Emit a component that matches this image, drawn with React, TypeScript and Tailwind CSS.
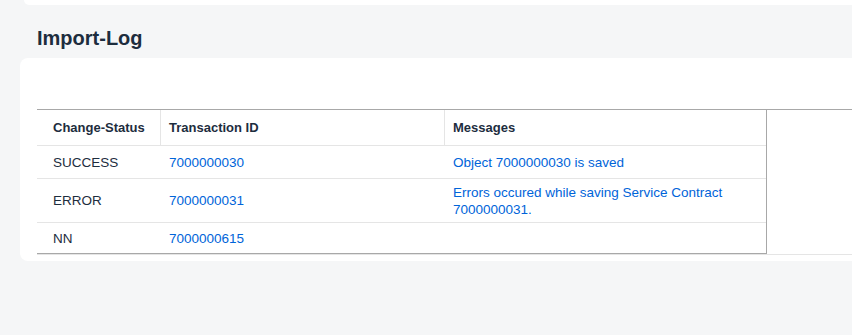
import React from "react";

const rows = [
  { status: "SUCCESS", id: "7000000030", msg: "Object 7000000030 is saved", h: "h-[33px]" },
  { status: "ERROR", id: "7000000031", msg: "Errors occured while saving Service Contract 7000000031.", h: "h-[44px]" },
  { status: "NN", id: "7000000615", msg: "", h: "h-[30px]" },
];

export default function App() {
  return (
    <div
      className="w-full h-[335px] overflow-hidden bg-[#f5f6f7] text-[#1d2d3e]"
      style={{ fontFamily: '"Liberation Sans", Arial, sans-serif' }}
    >
      {/* previous section card */}
      <div className="ml-[24px] h-[5px] bg-white rounded-bl-lg" />

      <h2 className="pl-[37px] mt-[21px] mb-[8px] text-[20px] leading-[24px] font-bold">Import-Log</h2>

      <div className="ml-[20px] h-[203px] bg-white rounded-l-lg pt-[51px] pl-[17px]">
        <div className="border-t border-[#a8a8a8] border-b border-b-[#e5e5e5]">
          <div className="w-[730px] border-r border-b border-[#a8a8a8] text-[13.5px] leading-[17px]">
            {/* header */}
            <div className="grid grid-cols-[124px_284px_322px] h-[36px] border-b border-[#e5e5e5] font-bold text-[13px]">
              <div className="flex items-center pl-4 border-r border-[#e5e5e5]">Change-Status</div>
              <div className="flex items-center pl-2 border-r border-[#e5e5e5]">Transaction ID</div>
              <div className="flex items-center pl-2">Messages</div>
            </div>
            {rows.map((r, i) => (
              <div
                key={r.id}
                className={`grid grid-cols-[124px_284px_322px] ${r.h} ${i < rows.length - 1 ? "border-b border-[#e5e5e5]" : ""}`}
              >
                <div className="flex items-center pl-4">{r.status}</div>
                <div className="flex items-center pl-2 text-[#0064d9]">{r.id}</div>
                <div className="flex items-center pl-2 pr-4 text-[#0064d9]">{r.msg}</div>
              </div>
            ))}
          </div>
        </div>
      </div>
    </div>
  );
}
